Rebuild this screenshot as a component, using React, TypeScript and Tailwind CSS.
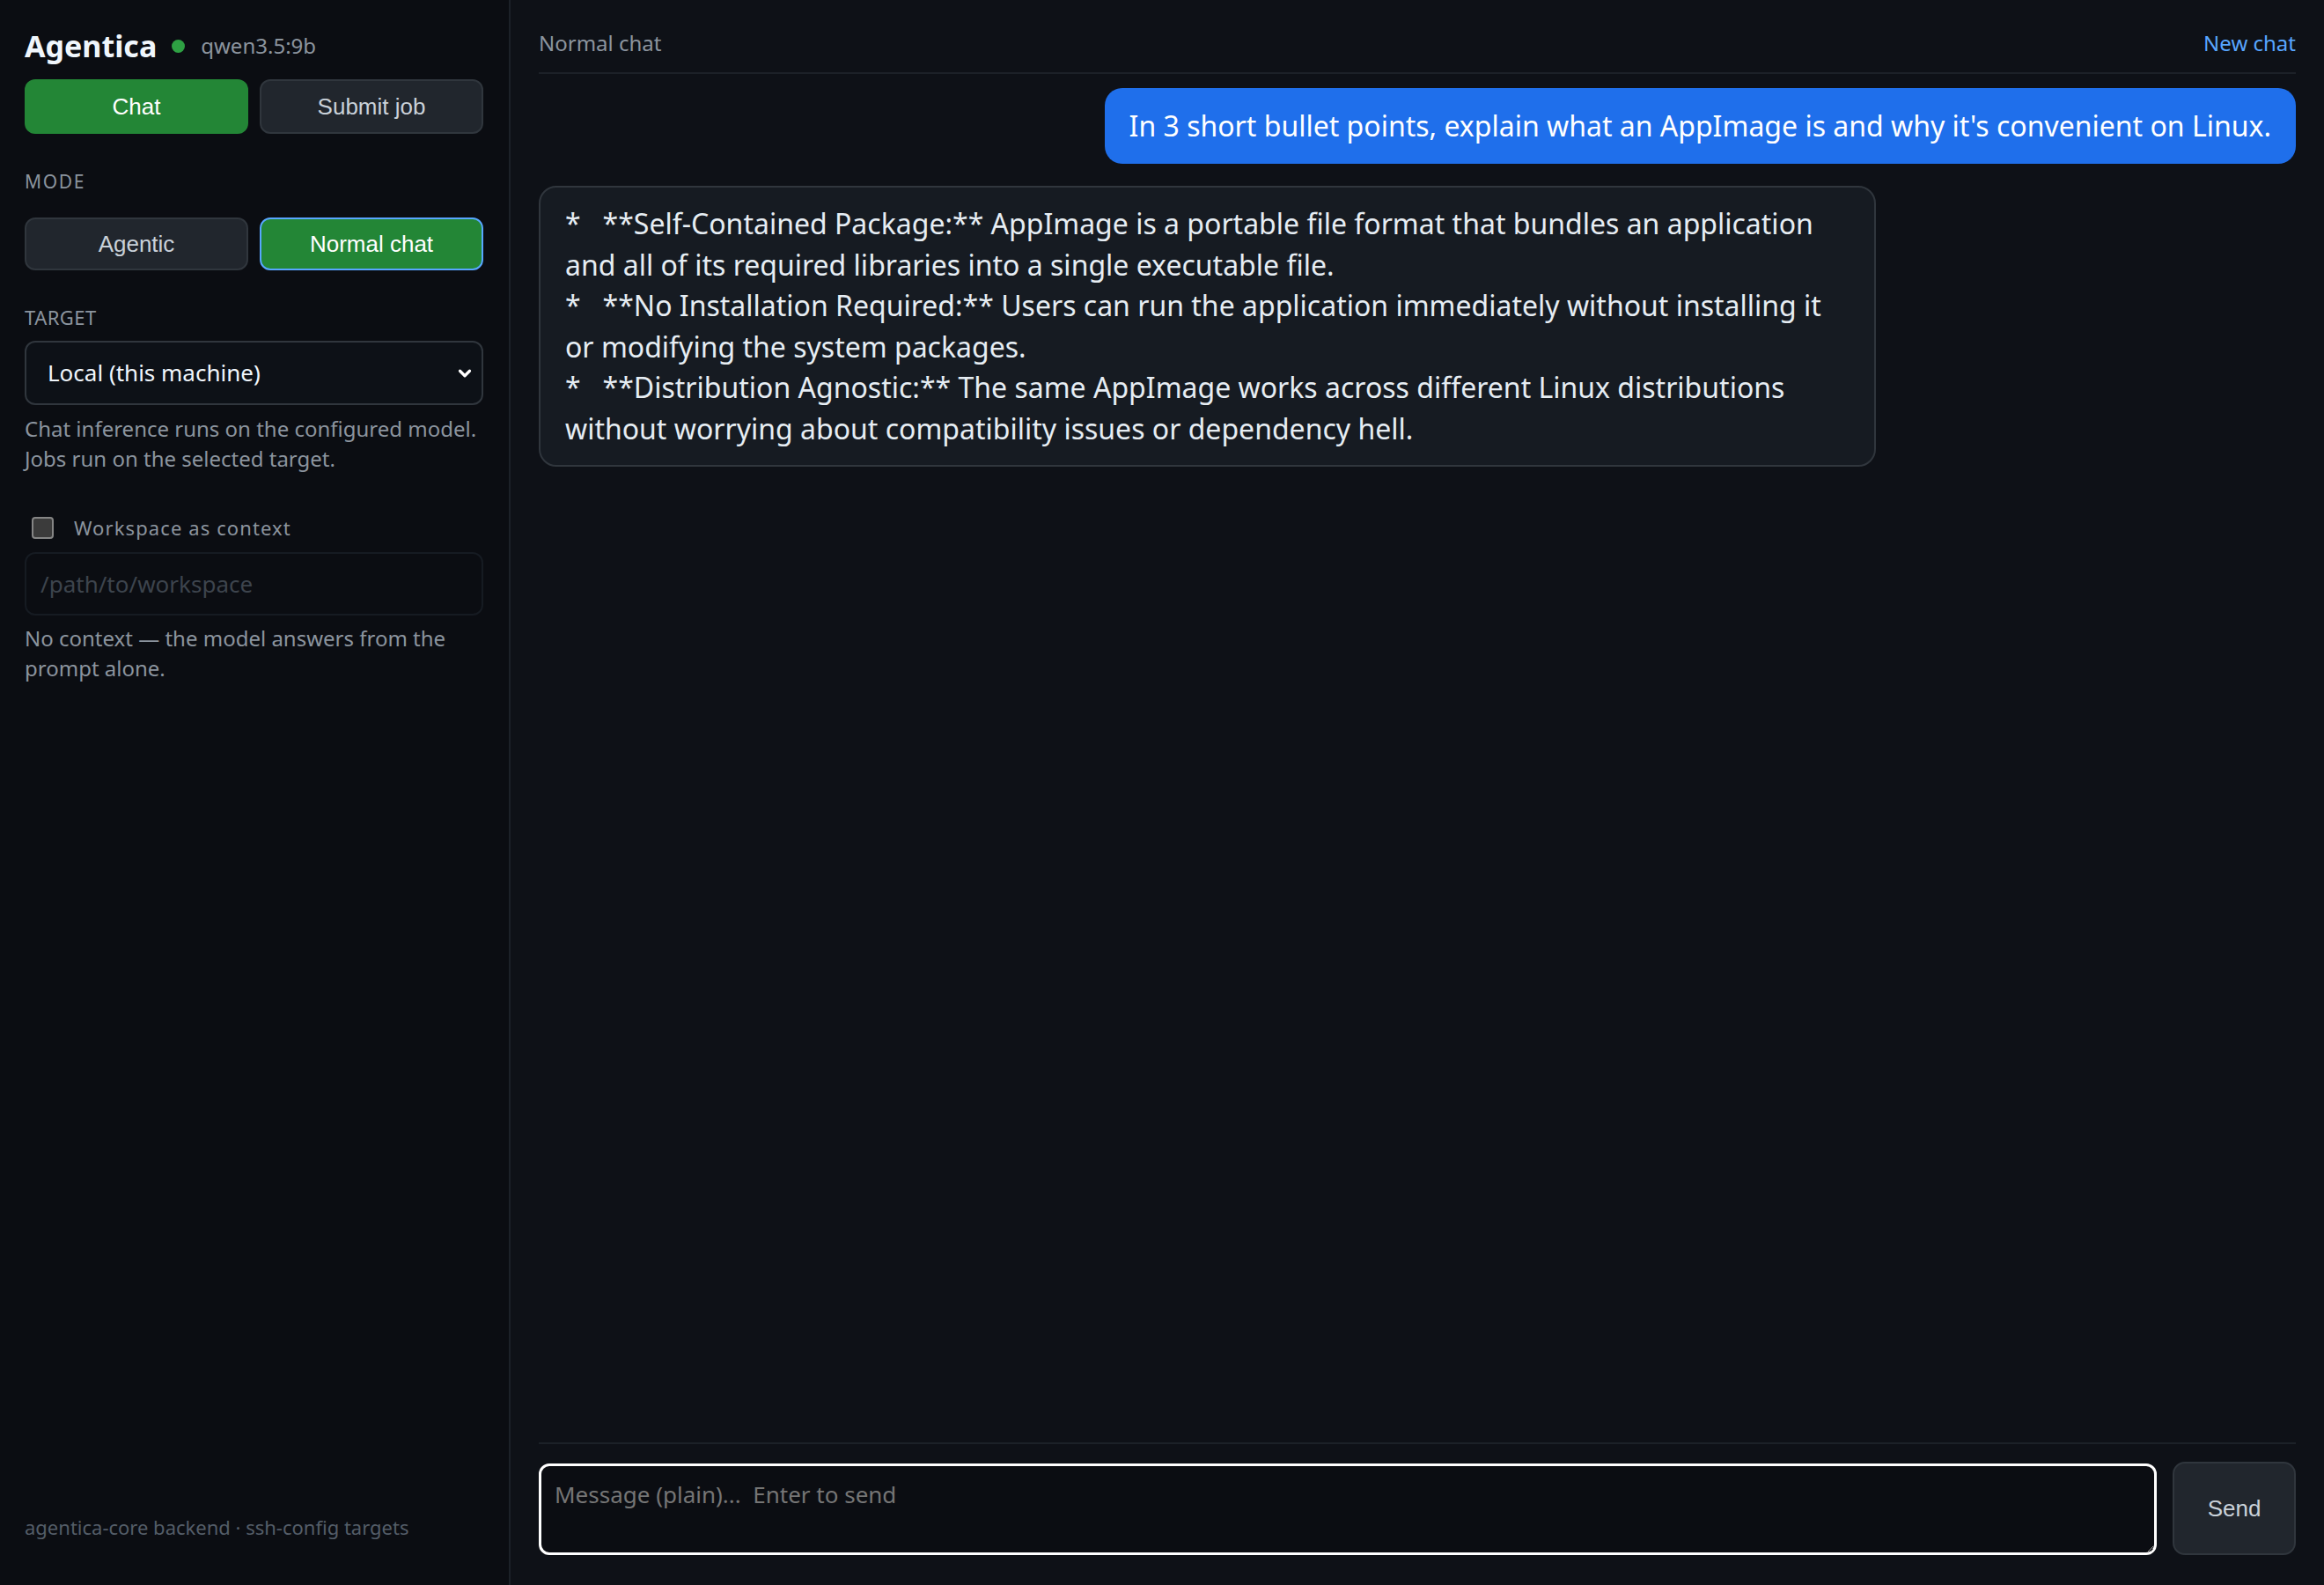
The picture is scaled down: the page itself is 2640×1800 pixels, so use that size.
import React from "react";
import { ChevronDown } from "lucide-react";

const assistantText =
  "*   **Self-Contained Package:** AppImage is a portable file format that bundles an application and all of its required libraries into a single executable file.\n*   **No Installation Required:** Users can run the application immediately without installing it or modifying the system packages.\n*   **Distribution Agnostic:** The same AppImage works across different Linux distributions without worrying about compatibility issues or dependency hell.";

export default function App() {
  return (
    <div className="flex h-screen w-full overflow-hidden bg-[#0e1117] font-['Noto_Sans',sans-serif] text-[#e6edf3]">
      {/* Sidebar */}
      <aside className="flex w-[580px] shrink-0 flex-col border-r-2 border-[#1c2128] bg-[#0b0d12] pl-[28px] pr-[29px] pt-[28px] pb-[51px]">
        <div className="flex h-[48px] items-center">
          <span className="text-[34px] font-bold leading-none text-[#f0f6fc]">Agentica</span>
          <span className="ml-[17px] h-[15px] w-[15px] rounded-full bg-[#2ea043]" />
          <span className="ml-[18px] text-[24px] leading-none text-[#8b949e]">qwen3.5:9b</span>
        </div>

        <div className="mt-[14px] grid grid-cols-2 gap-[13px]">
          <button className="h-[62px] rounded-[12px] bg-[#238636] font-['Liberation_Sans',sans-serif] text-[26px] text-white">
            Chat
          </button>
          <button className="h-[62px] rounded-[12px] border-2 border-[#30363d] bg-[#21262d] font-['Liberation_Sans',sans-serif] text-[26px] text-[#c9d1d9]">
            Submit job
          </button>
        </div>

        <div className="mt-[39px] text-[21px] leading-[30px] tracking-[0.08em] text-[#8b949e]">MODE</div>
        <div className="mt-[26px] grid grid-cols-2 gap-[13px]">
          <button className="h-[60px] rounded-[12px] border-2 border-[#30363d] bg-[#21262d] font-['Liberation_Sans',sans-serif] text-[26px] text-[#c9d1d9]">
            Agentic
          </button>
          <button className="h-[60px] rounded-[12px] border-2 border-[#58a6ff] bg-[#238636] font-['Liberation_Sans',sans-serif] text-[26px] text-white">
            Normal chat
          </button>
        </div>

        <div className="mt-[38px] text-[22px] leading-[30px] tracking-[0.02em] text-[#8b949e]">TARGET</div>
        <div className="mt-[12px] flex h-[73px] items-center justify-between rounded-[12px] border-2 border-[#30363d] bg-[#0d1117] pl-[24px] pr-[8px]">
          <span className="text-[26px] text-[#f0f6fc]">Local (this machine)</span>
          <ChevronDown size={22} strokeWidth={3.5} className="text-white" />
        </div>
        <p className="mt-[10px] text-[24px] leading-[34px] text-[#8b949e]">
          Chat inference runs on the configured model.
          <br />
          Jobs run on the selected target.
        </p>

        <label className="mt-[44px] flex h-[34px] items-center">
          <span className="ml-[8px] h-[25px] w-[25px] rounded-[4px] border-2 border-[#858585] bg-[#3b3b3b]" />
          <span className="ml-[23px] text-[22px] tracking-[0.05em] text-[#8b949e]">Workspace as context</span>
        </label>
        <input
          className="mt-[11px] h-[72px] rounded-[12px] border-2 border-[#161b22] bg-transparent px-[16px] text-[26px] text-[#c9d1d9] outline-none placeholder:text-[#3d444d]"
          placeholder="/path/to/workspace"
        />
        <p className="mt-[9px] text-[24px] leading-[34px] text-[#8b949e]">
          No context — the model answers from the
          <br />
          prompt alone.
        </p>

        <div className="mt-auto text-[22px] leading-[30px] text-[#545d68]">
          agentica-core backend · ssh-config targets
        </div>
      </aside>

      {/* Main */}
      <main className="flex min-w-0 flex-1 flex-col px-[32px] pb-[34px]">
        <header className="flex items-center justify-between border-b-2 border-[#1c2128] pt-[32px] pb-[16px]">
          <span className="text-[24px] leading-[34px] text-[#8b949e]">Normal chat</span>
          <span className="text-[24px] leading-[34px] text-[#58a6ff]">New chat</span>
        </header>

        <div className="flex flex-1 flex-col gap-[25px] pt-[16px]">
          <div className="flex justify-end">
            <div className="rounded-[20px] bg-[#1f6feb] px-[28px] py-[21px] text-[32px] leading-[44px] text-white">
              In 3 short bullet points, explain what an AppImage is and why it's convenient on Linux.
            </div>
          </div>
          <div className="flex justify-start">
            <div className="w-[1519px] whitespace-pre-wrap rounded-[20px] border-2 border-[#30363d] bg-[#161b22] px-[28px] py-[18px] text-[32px] leading-[46.5px] text-[#e6edf3]">
              {assistantText}
            </div>
          </div>
        </div>

        <div className="flex gap-[18px] border-t-2 border-[#1c2128] pt-[22px]">
          <textarea
            className="h-[104px] flex-1 rounded-[12px] border-[3px] border-white bg-[#0b0d12] px-[15px] py-[14px] text-[26px] leading-[36px] text-[#e6edf3] outline-none placeholder:text-[#757575]"
            placeholder="Message (plain)...  Enter to send"
          />
          <button className="-mt-[2px] h-[106px] w-[140px] rounded-[14px] border-2 border-[#30363d] bg-[#21262d] font-['Liberation_Sans',sans-serif] text-[26px] text-[#c9d1d9]">
            Send
          </button>
        </div>
      </main>
    </div>
  );
}
